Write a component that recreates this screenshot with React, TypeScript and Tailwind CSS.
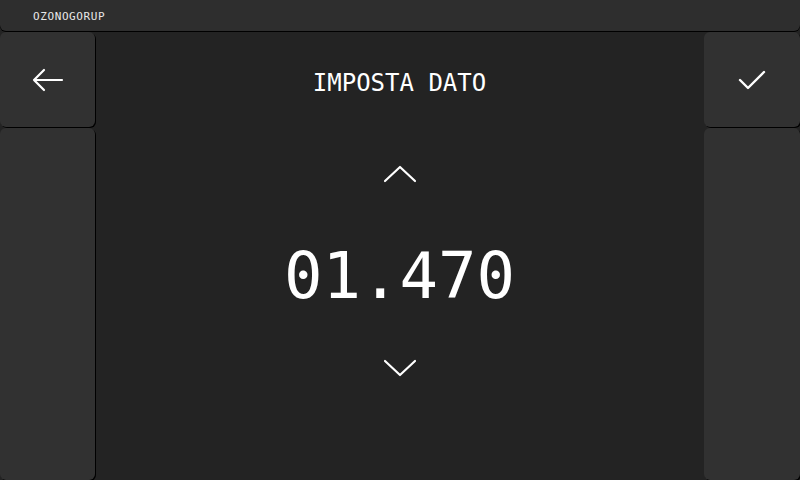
import React from "react";

const mono = { fontFamily: '"DejaVu Sans Mono", "Liberation Mono", monospace' };

function Panel({ className = "", children }: { className?: string; children?: React.ReactNode }) {
  return (
    <div className={`flex items-center justify-center rounded-md bg-[#313131] shadow-[1px_1px_0_#000] ${className}`}>
      {children}
    </div>
  );
}

export default function App() {
  return (
    <div className="flex h-[480px] w-[800px] flex-col overflow-hidden bg-[#232323] text-white" style={mono}>
      <div className="flex h-[31px] shrink-0 items-center rounded-b-md bg-[#2e2e2e] pl-[33px] pt-[3px] text-[11px] tracking-[0.6px] text-[#e8e8e8] shadow-[0_1px_0_#000]">
        OZONOGORUP
      </div>
      <div className="mt-px flex min-h-0 flex-1">
        <div className="flex w-[95px] flex-col gap-px">
          <Panel className="h-[95px] shrink-0">
            <svg width="32" height="24" viewBox="0 0 32 24" fill="none" stroke="white" strokeWidth="2.2" strokeLinecap="round" strokeLinejoin="round">
              <path d="M2 12h28M12 2 2 12l10 10" />
            </svg>
          </Panel>
          <Panel className="flex-1" />
        </div>
        <div className="flex flex-1 flex-col items-center">
          <div className="mt-[39px] text-[24px] leading-none">IMPOSTA DATO</div>
          <svg className="mt-[70px]" width="34" height="18" viewBox="0 0 34 18" fill="none" stroke="white" strokeWidth="2.2" strokeLinecap="round" strokeLinejoin="round">
            <path d="M2 16 17 2l15 14" />
          </svg>
          <div className="mt-[61px] text-[64px] leading-none [font-feature-settings:'zero'_1]">01.470</div>
          <svg className="mt-[51px]" width="34" height="18" viewBox="0 0 34 18" fill="none" stroke="white" strokeWidth="2.2" strokeLinecap="round" strokeLinejoin="round">
            <path d="M2 2l15 14L32 2" />
          </svg>
        </div>
        <div className="flex w-[96px] flex-col gap-px">
          <Panel className="h-[95px] shrink-0">
            <svg width="28" height="22" viewBox="0 0 28 22" fill="none" stroke="white" strokeWidth="2.4" strokeLinecap="round" strokeLinejoin="round">
              <path d="M2 11l8 8L26 3" />
            </svg>
          </Panel>
          <Panel className="flex-1" />
        </div>
      </div>
    </div>
  );
}
